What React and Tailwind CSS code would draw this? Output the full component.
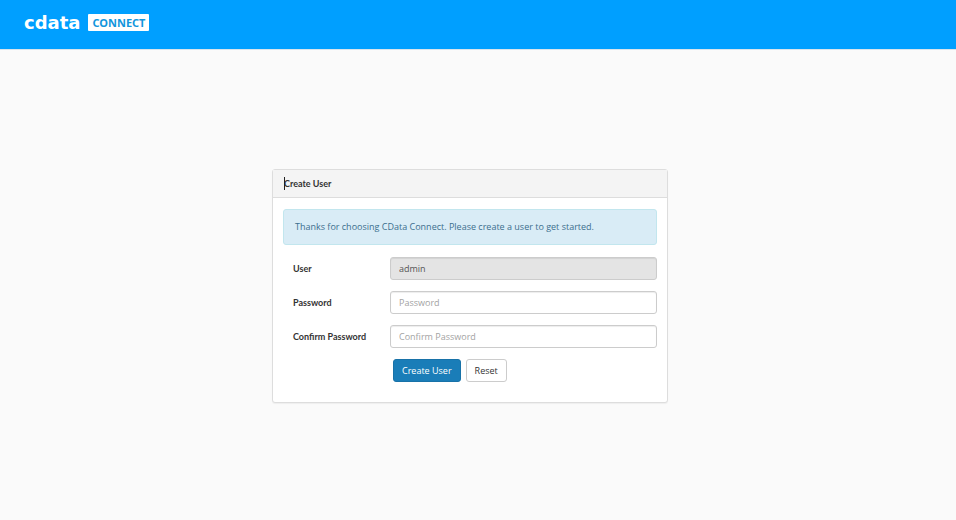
const fieldBase =
  "block h-[23px] w-full min-w-0 rounded-[3px] border border-[#ccc] px-2 text-[9px] leading-[14px] shadow-[inset_0_1px_1px_rgba(0,0,0,0.075)] outline-none placeholder:text-[#a3a3a3]";

function Field({ id, label, ...input }) {
  return (
    <div className="flex items-center">
      <label htmlFor={id} className="w-[107px] shrink-0 pl-[10px] font-['Lato','Noto_Sans',sans-serif] text-[9px] leading-[14px] font-bold">
        {label}
      </label>
      <input
        id={id}
        className={`${fieldBase} ${input.disabled ? "bg-[#e4e4e4] text-[#555]" : "bg-white text-[#555]"}`}
        {...input}
      />
    </div>
  );
}

export default function App() {
  return (
    <div className="min-h-screen bg-[#fafafa] font-['Open_Sans','Noto_Sans',sans-serif] text-[#333]">
      <header className="flex h-[50px] items-start border-b border-[#d9e4ec] bg-[#009fff] px-6 pt-[14px]">
        <a href="#" className="flex items-center gap-2">
          <span className="font-['DejaVu_Sans',sans-serif] text-[18px] leading-[17px] font-bold text-white">cdata</span>
          <span className="flex h-[17px] items-center rounded-[1px] bg-white px-1 font-['Noto_Sans',sans-serif] text-[11px] leading-none font-bold text-[#1296dc]">
            CONNECT
          </span>
        </a>
      </header>

      <main className="pt-[119px] pr-4">
        <section className="mx-auto w-full max-w-[396px] rounded-[3px] border border-[#ddd] bg-white pb-[20px] shadow-[0_1px_1px_rgba(0,0,0,0.05)]">
          <div className="flex h-7 items-center border-b border-[#ddd] bg-[#f4f4f4] px-[11px]">
            <h1 className="relative font-['Lato','Noto_Sans',sans-serif] text-[9px] leading-[14px] font-bold">
              <span className="absolute top-0 left-0 h-[13px] w-px bg-[#222]" />
              Create User
            </h1>
          </div>
          <div className="px-[10px] pt-[11px]">
            <p className="mb-3 flex h-9 items-center rounded-[3px] border border-[#c2e6ee] bg-[#d9ecf6] px-[11px] text-[9px] leading-[14px] text-[#3c6f8e]">
              Thanks for choosing CData Connect. Please create a user to get started.
            </p>
            <form className="flex flex-col gap-[11px]" onSubmit={(e) => e.preventDefault()}>
              <Field id="user" label="User" type="text" defaultValue="admin" disabled />
              <Field id="password" label="Password" type="password" placeholder="Password" />
              <Field id="confirm" label="Confirm Password" type="password" placeholder="Confirm Password" />
              <div className="flex gap-[5px] pl-[110px]">
                <button
                  type="submit"
                  className="h-[23px] rounded-[3px] border border-[#1872a8] bg-[#1a7db8] px-2 text-[9px] leading-[14px] text-white"
                >
                  Create User
                </button>
                <button
                  type="reset"
                  className="h-[23px] rounded-[3px] border border-[#ccc] bg-white px-2 text-[9px] leading-[14px]"
                >
                  Reset
                </button>
              </div>
            </form>
          </div>
        </section>
      </main>
    </div>
  );
}
